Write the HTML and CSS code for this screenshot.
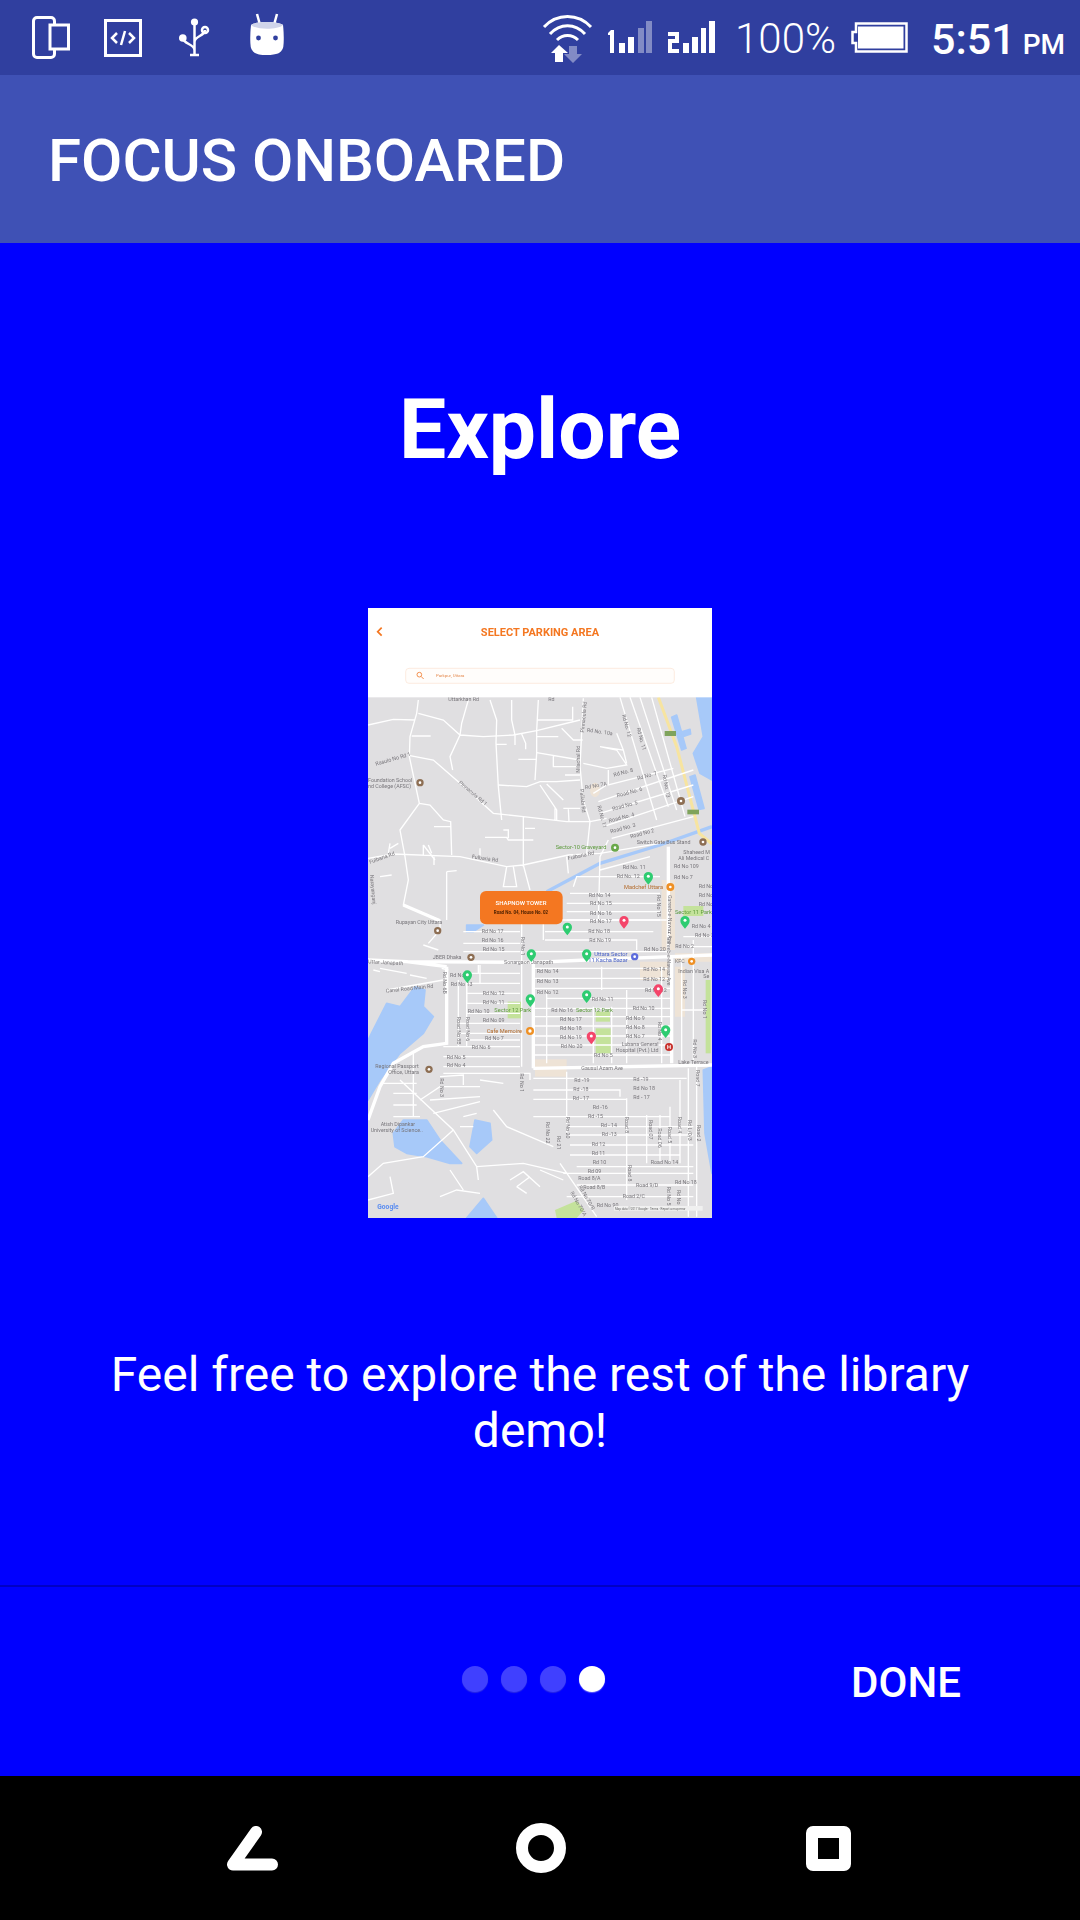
FILE: index.html
```html
<!DOCTYPE html>
<html lang="en">
<head>
<meta charset="utf-8">
<title>Focus Onboared</title>
<link rel="stylesheet" href="styles.css">
</head>
<body>
<div class="screen">
  <header class="status">
    <div class="status-left">
      <svg class="ic ic-device" viewBox="0 0 38 43"><rect x="1.5" y="1.5" width="21" height="40" rx="3.5" class="ol"/><rect x="18" y="9" width="18.5" height="24" class="ol fillbar"/></svg>
      <svg class="ic ic-code" viewBox="0 0 38 38"><rect x="1.5" y="1.5" width="35" height="35" class="ol"/><path d="M13 14l-5 5 5 5M25 14l5 5-5 5M21 12l-4 14" class="ol thin"/></svg>
      <svg class="ic ic-usb" viewBox="0 0 30 39"><circle cx="15.500" cy="4" r="3.600" class="sol"/><path d="M15.500 4V37M11 37H20M4 20c0 6 11.500 6 11.500 12M26 12c0 6-10.500 6-10.500 12" class="ol thin"/><circle cx="3.800" cy="20" r="3.800" class="sol"/><circle cx="26" cy="12" r="3" class="ol thin"/></svg>
      <svg class="ic ic-droid" viewBox="0 0 34 41"><path d="M7 0l2.500 9M27 0l-2.500 9" class="ol thin"/><path d="M1 11C6 7 28 7 33 11C34 20 34 30 33 34C31 39 27 41 17 41C7 41 3 39 1 34C0 30 0 20 1 11Z" class="sol"/><path d="M1 11C6 7 28 7 33 11C28 16 6 16 1 11Z" class="droid-top"/><circle cx="8.500" cy="24" r="2.400" class="eye"/><circle cx="25.500" cy="24" r="2.400" class="eye"/></svg>
    </div>
    <div class="status-right">
      <svg class="ic ic-wifi" viewBox="0 0 51 49"><path d="M2 14C15 0 36 0 49 14M8 21C18 10 33 10 43 21M15 27C21 21 30 21 36 27" class="ol wifi"/><path d="M17 32l9 8h-5v9h-8v-9H9Z" class="sol"/><path d="M27 33h8v8h5l-9 9-9-9h5Z" class="sol dim"/></svg>
      <svg class="ic ic-sim1" viewBox="0 0 44 32"><path d="M0 12l3-3h3v23H2V14H0ZM11 22h6v10h-6ZM20 16h6v16h-6Z" class="sol"/><path d="M30 7h6v25h-6ZM38 0h6v32h-6Z" class="sol dim"/></svg>
      <svg class="ic ic-sim2" viewBox="0 0 47 32"><path d="M0 11h11v11H4v6h7v4H0V18h7v-3H0ZM15 22h6v10h-6ZM24 16h6v16h-6ZM33 7h5v25h-5ZM41 0h6v32h-6Z" class="sol"/></svg>
      <span class="pct">100%</span>
      <svg class="ic ic-batt" viewBox="0 0 57 31"><path d="M5 1.500H55.500V29.500H5V21H1.500V10H5Z" class="ol batt"/><path d="M7 4.500H52.500V26.500H7Z" class="sol"/></svg>
      <span class="clock">5:51</span>
      <span class="ampm">PM</span>
    </div>
  </header>

  <div class="appbar">FOCUS ONBOARED</div>

  <main class="slide">
    <h1 class="slide-title">Explore</h1>
    <svg class="shot" viewBox="24 24 1032 1830" role="img" aria-label="Map of parking area">
      <rect x="24" y="24" width="1032" height="1830" class="land"/>
      <g class="parks">
        <rect x="443" y="1205" width="40" height="50"/>
        <rect x="707" y="1235" width="43" height="30"/>
        <rect x="707" y="1285" width="45" height="75"/>
        <rect x="970" y="918" width="60" height="30"/>
        <rect x="1037" y="1140" width="15" height="220"/>
        <path d="M585 1830L650 1802L672 1830L650 1854H590Z"/>
      </g>
      <g class="beige">
        <path d="M525 1378H620V1430H525Z"/>
        <path d="M905 840H945V1050H905ZM945 1060H1056V1085H945ZM945 1100H975V1250H945Z"/>
        <path d="M840 1085H925V1140H840Z"/>
        <path d="M690 570a14 20 0 1 0 30 0a14 20 0 1 0-30 0Z"/>
      </g>
      <g class="water">
        <path d="M1010 292H1056V540L1020 520L1000 460L1030 410Z"/>
        <path d="M935 352L950 345L978 445L965 450ZM950 400L990 388L992 402L955 415ZM990 530L1005 525L1032 625L1017 628Z"/>
        <path d="M24 1320L80 1210L120 1220L165 1160L195 1170L190 1220L220 1250L190 1300L120 1360L60 1440L24 1500Z"/>
        <path d="M320 975H370L340 995H320Z"/>
        <path d="M100 1600L130 1560L200 1560L240 1620L305 1690L270 1690L200 1670L140 1660L105 1640Z"/>
        <path d="M330 1640L345 1560L390 1570L395 1620L350 1660Z"/>
        <path d="M1030 1410L1056 1400V1720L1035 1600Z"/>
        <path d="M320 1854L370 1795L410 1854Z"/>
      </g>
      <path class="canal" d="M560 875L720 790L900 735L1056 680"/>
      <path class="yellow" d="M895 292L950 440L1018 700L1056 732"/>
      <g class="roads">
        <path d="M175 300L170 340L150 410L148 470L178 610L120 690L135 770L145 840L130 915L240 960M178 610L210 615L250 660L272 665L275 765M222 680H272M190 735L225 780M205 735L215 760"/>
        <path d="M175 340L250 360L300 405L370 410L460 405L530 392L660 360M24 375L100 358L165 360M155 408H212M325 300L305 370L300 405L270 470L278 510"/>
        <path d="M390 300L410 360L408 430L415 560L425 660M455 300L455 360L465 405L465 435M535 300L530 392L530 460L525 540M410 433H440M530 410H595M485 402L497 430V448M530 360H640M638 320V360"/>
        <path d="M150 467L220 480L300 550L400 640L490 650L620 665L690 665L740 655M415 555L500 560L540 545L590 545L660 540M540 555L590 630V660M560 552L610 600M625 628L627 665M585 625V660M610 625H660M490 650V800M375 712H440L445 720H520M495 685H525M430 690H445V715"/>
        <path d="M670 295L660 500L670 600L690 665L680 760M605 385L640 420H668M530 458L660 480M580 465V500H660M475 478H530M615 525H660M745 510V555L940 505M740 555L700 580M715 605L1000 510M720 640L1000 555M730 680L1000 590M755 715L1000 650"/>
        <path d="M780 292L890 660M810 292L925 620M840 292L950 630M875 292L975 650M670 490L740 505L800 495L770 450L720 440L790 450L800 490M790 450L770 400"/>
        <path d="M24 775L100 762L300 770L440 800L490 795L625 765L720 760L900 730M440 800L430 860H470L460 800M490 795L510 870M620 770L625 820M260 815L290 812M260 815V960M90 745L115 730M85 760L90 730M60 830L95 825M360 745V770M190 735V765M222 770V795"/>
        <path d="M745 720L720 770L715 960M720 810L870 770M630 880H900M640 860L650 830H900M620 910H900M620 935H900M620 960H900"/>
      </g>
      <g class="roads" transform="translate(0 900)">
        <path d="M310 95H480M310 130H480M310 155H480M360 195V250M330 220H480M320 250H480M320 280H480M320 310H480M320 340H480M290 370H480M290 400H480M320 420H480M250 440H480M250 470H480M250 500H480M295 240V440M320 240V440M355 195V220"/>
        <path d="M555 60H920M555 95H880M555 120H830V150M520 155H930M520 205H930M520 235H930M520 265H930M560 295H930M520 325H930M520 350H930M520 378H930M520 408H930M520 435H930M520 465H930M560 270V490M725 200V270M800 270V490M700 320V490M755 320V490M905 200V490M965 170V480M1000 120V480M970 110H1056M970 140H1056M965 330H1040"/>
        <path d="M485 0V500M550 0V120M205 130L240 90V60M190 135L235 150M60 205L140 220M150 225L200 235M245 205L265 210M60 215L40 210M80 270L250 240M320 255V310"/>
        <path d="M250 520H510V540M520 535H980M520 570H780V590M520 598H800V620M520 650H930M620 515V700M625 680H1000M625 705H1000M630 735H1000M630 765H960V790M650 800H1000M610 820H1000M650 855H1000M620 890H1000M985 505V950M960 540V790M860 645V790M900 645V790M930 620V790M800 595V900M1010 500V950"/>
        <path d="M60 550H170M100 580H170M100 615H170M160 460V650M100 650H180M180 600L240 560H360M210 600L360 590M220 640L360 605M240 530L310 525V555M360 540L430 550M120 540L280 690L350 800L490 790L620 820M280 690L190 770L70 790L24 830M350 800L355 840M240 890L290 870L360 880M90 830L100 880L24 900M450 840L490 815L540 860M470 860L510 830M500 880L470 860M270 810L310 870M350 640L310 650M400 630L440 680L580 740M300 680L340 680M540 810L610 840M600 790L710 950"/>
      </g>
      <g class="majors">
        <path d="M925 740V1060"/>
        <path transform="translate(0 900)" d="M24 180L140 185L260 200M140 185L520 187L680 180L930 170L1056 165M520 187V505M935 170V490M520 505L1056 495M260 200V430L190 440L100 490L60 560L24 660"/>
        <path d="M130 915L240 962" />
      </g>
      <g class="lbl">
        <text x="265" y="302">Uttarkhan Rd</text>
        <text x="565" y="302">Rd</text>
        <text x="680" y="395" transform="rotate(8 680 395)">Rd No. 10a</text>
        <text x="786" y="345" transform="rotate(75 786 345)">Rd No. 12</text>
        <text x="830" y="385" transform="rotate(75 830 385)">Rd No. 11</text>
        <text x="672" y="398" transform="rotate(-85 672 398)">Pinnacula Rd</text>
        <text x="48" y="497" transform="rotate(-16 48 497)">Rasulo No Rd 1</text>
        <text x="24" y="545">Foundation School</text>
        <text x="24" y="564">nd College (AFSC)</text>
        <text x="295" y="550" transform="rotate(40 295 550)">Pinnacula Rd 1</text>
        <text x="660" y="518" transform="rotate(-90 660 518)">Nilachal Rd</text>
        <text x="676" y="568" transform="rotate(-10 676 568)">Rd No 7A</text>
        <text x="762" y="530" transform="rotate(-15 762 530)">Rd No. 8</text>
        <text x="833" y="540" transform="rotate(-15 833 540)">Rd No. 7</text>
        <text x="772" y="592" transform="rotate(-15 772 592)">Road No. 6</text>
        <text x="758" y="632" transform="rotate(-15 758 632)">Road No. 5</text>
        <text x="748" y="668" transform="rotate(-15 748 668)">Road No. 4</text>
        <text x="752" y="700" transform="rotate(-15 752 700)">Road No. 3</text>
        <text x="812" y="715" transform="rotate(-15 812 715)">Road No 2</text>
        <text x="908" y="525" transform="rotate(80 908 525)">Rd No. 13</text>
        <text x="660" y="568" transform="rotate(85 660 568)">Pallabi Rd</text>
        <text x="712" y="618" transform="rotate(75 712 618)">Rd No. 11</text>
        <text x="830" y="732">Switch Gate Bus Stand</text>
        <text x="970" y="762">Shaheed M</text>
        <text x="955" y="779">Ali Medical C</text>
        <text x="30" y="792" transform="rotate(-20 30 792)">Fulbaria Rd</text>
        <text x="335" y="775" transform="rotate(8 335 775)">Fulbaria Rd</text>
        <text x="625" y="780" transform="rotate(-12 625 780)">Fulbaria Rd</text>
        <text x="788" y="806">Rd No. 11</text>
        <text x="770" y="834">Rd No. 12</text>
        <text x="942" y="803">Rd No 109</text>
        <text x="942" y="836">Rd No 7</text>
        <text x="1016" y="864">Rd No</text>
        <text x="1016" y="892">Rd No</text>
        <text x="1016" y="919">Rd No</text>
        <text x="30" y="825" transform="rotate(85 30 825)">Narayanganj</text>
        <text x="686" y="890">Rd No 14</text>
        <text x="690" y="916">Rd No 15</text>
        <text x="690" y="944">Rd No 16</text>
        <text x="892" y="885" transform="rotate(90 892 885)">Rd No 15</text>
        <text x="925" y="885" transform="rotate(90 925 885)">Gareeb-e-Nawaz Ave</text>
      </g>
      <text x="587" y="748" class="lbl-green">Sector-10 Graveyard</text>
      <text x="792" y="867" class="lbl-orange">Madchef Uttara</text>
      <text x="945" y="941" class="lbl-green">Sector 11 Park</text>
      <g class="lbl" transform="translate(0 900)">
        <text x="107" y="73">Rupayan City Uttara</text>
        <text x="365" y="99">Rd No 17</text>
        <text x="365" y="127">Rd No 16</text>
        <text x="368" y="153">Rd No 15</text>
        <text x="690" y="70">Rd No 17</text>
        <text x="685" y="98">Rd No 18</text>
        <text x="688" y="125">Rd No 19</text>
        <text x="852" y="153">Rd No 20</text>
        <text x="995" y="83">Rd No 4</text>
        <text x="1005" y="111">Rd No 3</text>
        <text x="946" y="143">Rd No 2</text>
        <text x="218" y="178">JBER Dhaka</text>
        <text x="24" y="190" transform="rotate(3 24 190)">Uttar Janapath</text>
        <text x="432" y="191">Sonargaon Janapath</text>
        <text x="530" y="218">Rd No 14</text>
        <text x="850" y="213">Rd No 14</text>
        <text x="530" y="249">Rd No 13</text>
        <text x="850" y="243">Rd No 12</text>
        <text x="530" y="281">Rd No 12</text>
        <text x="855" y="275">Rd No 12</text>
        <text x="695" y="304">Rd No 11</text>
        <text x="270" y="232">Rd No</text>
        <text x="272" y="259">Rd No 13</text>
        <text x="78" y="278" transform="rotate(-6 78 278)">Canal Road Main Rd</text>
        <text x="368" y="284">Rd No 12</text>
        <text x="368" y="311">Rd No 11</text>
        <text x="323" y="339">Rd No 10</text>
        <text x="368" y="366">Rd No 09</text>
        <text x="375" y="419">Rd No 7</text>
        <text x="335" y="447">Rd No 6</text>
        <text x="260" y="476">Rd No 5</text>
        <text x="260" y="502">Rd No 4</text>
        <text x="574" y="335">Rd No 16</text>
        <text x="818" y="331">Rd No 10</text>
        <text x="600" y="362">Rd No 17</text>
        <text x="798" y="359">Rd No 9</text>
        <text x="600" y="390">Rd No 18</text>
        <text x="798" y="386">Rd No 8</text>
        <text x="600" y="417">Rd No 19</text>
        <text x="798" y="413">Rd No 7</text>
        <text x="602" y="444">Rd No 20</text>
        <text x="702" y="470">Rd No 5</text>
        <text x="785" y="437">Lubana General</text>
        <text x="767" y="456">Hospital (Pvt.) Ltd</text>
        <text x="46" y="505">Regional Passport</text>
        <text x="85" y="523">Office, Uttara</text>
        <text x="62" y="677">Atish Dipankar</text>
        <text x="32" y="695">University of Science..</text>
        <text x="664" y="510">Gausul Azam Ave</text>
        <text x="955" y="493">Lake Terrace</text>
        <text x="945" y="190">KFC</text>
        <text x="955" y="218">Indian Visa A</text>
        <text x="1030" y="235">Se</text>
        <text x="643" y="545">Rd -19</text>
        <text x="640" y="573">Rd -18</text>
        <text x="638" y="600">Rd - 17</text>
        <text x="820" y="543">Rd -19</text>
        <text x="820" y="570">Rd No 18</text>
        <text x="820" y="597">Rd - 17</text>
        <text x="698" y="626">Rd -16</text>
        <text x="684" y="653">Rd -15</text>
        <text x="722" y="680">Rd - 14</text>
        <text x="725" y="707">Rd -13</text>
        <text x="695" y="737">Rd 12</text>
        <text x="695" y="764">Rd 11</text>
        <text x="698" y="791">Rd 10</text>
        <text x="683" y="820">Rd 09</text>
        <text x="872" y="793">Road No 14</text>
        <text x="945" y="853">Rd No 18</text>
        <text x="828" y="861">Road 9/D</text>
        <text x="788" y="893">Road 2/C</text>
        <text x="710" y="922">Rd No 90</text>
        <text x="655" y="840">Road 8/A</text>
        <text x="670" y="868">Road 8/B</text>
        <text x="250" y="215" transform="rotate(90 250 215)">Rd No 6B</text>
        <text x="290" y="350" transform="rotate(90 290 350)">Road No 8B</text>
        <text x="318" y="350" transform="rotate(90 318 350)">Road No 6</text>
        <text x="240" y="535" transform="rotate(90 240 535)">Rd No 3</text>
        <text x="482" y="110" transform="rotate(90 482 110)">Rd No 1</text>
        <text x="480" y="520" transform="rotate(90 480 520)">Rd No 1</text>
        <text x="895" y="365" transform="rotate(90 895 365)">Rd No 4</text>
        <text x="968" y="240" transform="rotate(90 968 240)">Rd No 3</text>
        <text x="1030" y="300" transform="rotate(90 1030 300)">Rd No 1</text>
        <text x="1000" y="418" transform="rotate(90 1000 418)">Rd No 3</text>
        <text x="1008" y="510" transform="rotate(90 1008 510)">Road 7</text>
        <text x="920" y="110" transform="rotate(90 920 110)">Gareeb-e-Nawaz Ave</text>
        <text x="558" y="665" transform="rotate(90 558 665)">Rd No 22</text>
        <text x="590" y="708" transform="rotate(90 590 708)">Rd 21</text>
        <text x="617" y="650" transform="rotate(90 617 650)">Rd No 20</text>
        <text x="795" y="650" transform="rotate(90 795 650)">Road 8</text>
        <text x="868" y="660" transform="rotate(90 868 660)">Road 07</text>
        <text x="895" y="685" transform="rotate(90 895 685)">Road 06</text>
        <text x="925" y="680" transform="rotate(90 925 680)">Road 5</text>
        <text x="953" y="650" transform="rotate(90 953 650)">Road 4</text>
        <text x="985" y="660" transform="rotate(90 985 660)">Rd L/0/3</text>
        <text x="1012" y="675" transform="rotate(90 1012 675)">Road 2</text>
        <text x="805" y="795" transform="rotate(90 805 795)">Road 8</text>
        <text x="630" y="878" transform="rotate(60 630 878)">Rd No 70/A</text>
        <text x="655" y="860" transform="rotate(60 655 860)">Rd No 70/B</text>
        <text x="922" y="860" transform="rotate(90 922 860)">Rd No 5</text>
        <text x="950" y="870" transform="rotate(90 950 870)">Rd No 4</text>
      </g>
      <g transform="translate(0 900)">
        <text x="403" y="336" class="lbl-green">Sector 12 Park</text>
        <text x="648" y="336" class="lbl-green">Sector 12 Park</text>
        <text x="380" y="398" class="lbl-orange">Cafe Memoire</text>
        <text x="703" y="168" class="lbl-blue">Uttara Sector</text>
        <text x="685" y="185" class="lbl-blue">11 Kacha Bazar</text>
        <text x="52" y="926" class="google">Google</text>
        <rect x="762" y="918" width="266" height="14" class="attr-bg"/>
        <text x="765" y="929" class="attr">Map data ©2017 Google · Terms · Report a map error</text>
        <circle cx="233" cy="92" r="11" class="poi-brown"/>
        <circle cx="333" cy="172" r="11" class="poi-brown"/>
        <circle cx="207" cy="508" r="11" class="poi-brown"/>
        <circle cx="510" cy="393" r="12" class="poi-orange"/>
        <circle cx="995" cy="184" r="11" class="poi-orange"/>
        <circle cx="824" cy="170" r="11" class="poi-blue"/>
        <circle cx="927" cy="441" r="12" class="poi-red"/>
        <circle cx="233" cy="92" r="4" class="poi-dot"/>
        <circle cx="333" cy="172" r="4" class="poi-dot"/>
        <circle cx="207" cy="508" r="4" class="poi-dot"/>
        <circle cx="510" cy="393" r="5" class="poi-dot"/>
        <circle cx="995" cy="184" r="4" class="poi-dot"/>
        <circle cx="824" cy="170" r="4" class="poi-dot"/>
        <path d="M923 435v12M931 435v12M923 441h8" class="poi-h"/>
      </g>
      <circle cx="180" cy="548" r="11" class="poi-brown"/>
      <circle cx="963" cy="603" r="12" class="poi-brown"/>
      <circle cx="1029" cy="726" r="11" class="poi-brown"/>
      <circle cx="765" cy="743" r="12" class="poi-green"/>
      <circle cx="931" cy="861" r="12" class="poi-orange"/>
      <circle cx="180" cy="548" r="4" class="poi-dot"/>
      <circle cx="963" cy="603" r="4" class="poi-dot"/>
      <circle cx="1029" cy="726" r="4" class="poi-dot"/>
      <circle cx="765" cy="743" r="4" class="poi-dot"/>
      <circle cx="931" cy="861" r="4" class="poi-dot"/>
      <rect x="914" y="393" width="34" height="15" class="shield"/>
      <rect x="982" y="629" width="35" height="14" class="shield"/>
      <defs>
        <g id="pin"><path d="M0 24C-8 14-14 8-14 0A14 14 0 0 1 14 0C14 8 8 14 0 24Z"/><circle cx="0" cy="-1" r="4.500" class="pin-dot"/></g>
      </defs>
      <g class="pin-green">
        <use href="#pin" x="865" y="830"/>
        <use href="#pin" x="975" y="962"/>
        <use href="#pin" x="622" y="982"/>
        <use href="#pin" x="514" y="1062"/>
        <use href="#pin" x="680" y="1062"/>
        <use href="#pin" x="322" y="1125"/>
        <use href="#pin" x="511" y="1197"/>
        <use href="#pin" x="680" y="1185"/>
        <use href="#pin" x="917" y="1290"/>
      </g>
      <g class="pin-red">
        <use href="#pin" x="792" y="962"/>
        <use href="#pin" x="895" y="1167"/>
        <use href="#pin" x="694" y="1309"/>
      </g>
      <rect x="360" y="873" width="248" height="100" rx="18" class="orange"/>
      <text x="483" y="915" class="callout-a">SHAPNOW TOWER</text>
      <text x="483" y="943" class="callout-b">Road No. 04, House No. 02</text>
      <rect x="24" y="24" width="1032" height="268" class="head"/>
      <path d="M65 83L53 95L65 107" class="chev"/>
      <text x="540" y="107" class="head-title">SELECT PARKING AREA</text>
      <rect x="137" y="205" width="806" height="45" rx="10" class="searchbox"/>
      <circle cx="178" cy="224" r="7" class="searchic"/>
      <path d="M183 229L191 237" class="searchic"/>
      <text x="228" y="231" class="search-text">Parkpur, Uttara</text>
    </svg>
    <p class="slide-text">Feel free to explore the rest of the library demo!</p>
  </main>

  <footer class="pager">
    <div class="dots">
      <span class="dot"></span>
      <span class="dot"></span>
      <span class="dot"></span>
      <span class="dot active"></span>
    </div>
    <span class="done">DONE</span>
  </footer>

  <nav class="navbar">
    <svg class="nav-back" viewBox="0 0 53 45"><path d="M30 6L7 38.500H46" class="navline"/></svg>
    <svg class="nav-home" viewBox="0 0 50 50"><circle cx="25" cy="25" r="19" class="navring"/></svg>
    <svg class="nav-sq" viewBox="0 0 45 45"><rect x="6" y="6" width="33" height="33" rx="1" class="navsq"/></svg>
  </nav>
</div>
</body>
</html>
```
FILE: styles.css
```css
* { box-sizing: border-box; }
html, body { margin: 0; padding: 0; }
body { width: 1080px; height: 1920px; overflow: hidden; font-family: Roboto, "Liberation Sans", sans-serif; color: #fff; }
.screen { width: 1080px; height: 1920px; display: flex; flex-direction: column; background: #0000ff; }

.status { height: 75px; flex: none; background: #303f9f; display: flex; justify-content: space-between; align-items: flex-start; padding: 0 15px 0 32px; }
.status-left { display: flex; align-items: flex-start; }
.status-right { display: flex; align-items: flex-start; }
.ic { display: block; flex: none; overflow: visible; }
.ol { fill: none; stroke: #fff; stroke-width: 3; }
.ol.fillbar { fill: #303f9f; }
.ol.thin { stroke-width: 2.5; }
.ol.wifi { stroke-width: 3; }
.ol.batt { stroke-width: 2.5; }
.sol { fill: #fff; }
.sol.dim { opacity: .4; }
.droid-top { fill: #cfd4ea; }
.eye { fill: #303f9f; }
.ic-device { width: 38px; height: 43px; margin-top: 16px; }
.ic-code { width: 38px; height: 38px; margin: 19px 0 0 34px; }
.ic-usb { width: 30px; height: 39px; margin: 18px 0 0 37px; }
.ic-droid { width: 34px; height: 41px; margin: 14px 0 0 41px; }
.ic-wifi { width: 51px; height: 49px; margin-top: 13px; }
.ic-sim1 { width: 44px; height: 32px; margin: 21px 0 0 15px; }
.ic-sim2 { width: 47px; height: 32px; margin: 21px 0 0 16px; }
.pct { font-size: 42px; font-weight: 300; line-height: 50px; margin: 14px 0 0 20px; }
.ic-batt { width: 57px; height: 31px; margin: 22px 0 0 15px; }
.clock { font-size: 43px; font-weight: 500; line-height: 50px; margin: 14px 0 0 23px; }
.ampm { font-size: 28px; font-weight: 500; line-height: 34px; margin: 28px 0 0 7px; }

.appbar { height: 168px; flex: none; background: #3f51b5; padding: 6px 0 0 48px; font-size: 60px; font-weight: 500; line-height: 160px; }

.slide { flex: 1; display: flex; flex-direction: column; align-items: center; }
.slide-title { margin: 131px 0 0; font-size: 84px; font-weight: 700; line-height: 112px; height: 234px; }
.shot { display: block; width: 344px; height: 610px; flex: none; filter: blur(0.45px); }
.slide-text { margin: 129px 0 0; width: 900px; text-align: center; font-size: 48px; line-height: 56px; }

.land { fill: #e0dfe1; }
.parks { fill: #c4e29b; }
.beige { fill: #eee3d6; }
.water { fill: #a7c9f9; stroke: #a7c9f9; stroke-width: 5; stroke-linejoin: round; }
.canal { fill: none; stroke: #a7c9f9; stroke-width: 10; }
.yellow { fill: none; stroke: #f7e4a0; stroke-width: 9; }
.roads { fill: none; stroke: #fff; stroke-width: 4; }
.roads path { fill: none; }
.majors { fill: none; stroke: #fff; stroke-width: 10; }
.lbl { font-size: 16px; fill: #77757a; font-family: Roboto, sans-serif; }
.lbl-green { font-size: 17px; fill: #5c9a3c; font-family: Roboto, sans-serif; }
.lbl-orange { font-size: 17px; fill: #b36a2a; font-family: Roboto, sans-serif; }
.lbl-blue { font-size: 17px; fill: #4a62c8; font-family: Roboto, sans-serif; }
.google { font-size: 20px; font-weight: 700; fill: #5a8cf0; font-family: Roboto, sans-serif; }
.attr-bg { fill: #f0f0f0; }
.attr { font-size: 9px; fill: #666; font-family: Roboto, sans-serif; }
.poi-brown { fill: #8d6e53; }
.poi-orange { fill: #ef9024; }
.poi-blue { fill: #5c6bdc; }
.poi-red { fill: #c8322e; }
.poi-green { fill: #69a84a; }
.poi-dot { fill: #fff; }
.poi-h { fill: none; stroke: #fff; stroke-width: 2.5; }
.shield { fill: #7fa35c; }
.pin-green { fill: #2ecc71; }
.pin-red { fill: #f4456a; }
.pin-dot { fill: #fff; }
.orange { fill: #f47721; }
.callout-a { font-size: 18px; fill: #fff; font-weight: 500; text-anchor: middle; font-family: Roboto, sans-serif; }
.callout-b { font-size: 13.500px; fill: #4a1f00; font-weight: 700; text-anchor: middle; font-family: Roboto, sans-serif; }
.head { fill: #fff; }
.chev { fill: none; stroke: #f47721; stroke-width: 5; }
.head-title { font-size: 33px; font-weight: 700; fill: #f47721; text-anchor: middle; font-family: Roboto, sans-serif; }
.searchbox { fill: #fffdfb; stroke: #fbe3d2; stroke-width: 2; }
.searchic { fill: none; stroke: #f4914f; stroke-width: 3; }
.search-text { font-size: 13px; fill: #e58b50; font-family: Roboto, sans-serif; }

.pager { height: 191px; flex: none; border-top: 2px solid #0000c4; display: flex; align-items: flex-start; }
.dots { display: flex; gap: 13px; margin: 79px 0 0 462px; }
.dot { width: 26px; height: 26px; border-radius: 50%; background: #4040ff; box-shadow: 0 1px 1px #2a2ae6; }
.dot.active { background: #fff; box-shadow: 0 1px 1px #6060ff; }
.done { font-size: 42px; font-weight: 500; line-height: 48px; margin: 72px 0 0 auto; padding-right: 119px; }

.navbar { height: 144px; flex: none; background: #000; display: flex; align-items: flex-start; padding-left: 226px; }
.nav-back { width: 53px; height: 45px; margin-top: 50px; }
.nav-home { width: 50px; height: 50px; margin: 47px 0 0 237px; }
.nav-sq { width: 45px; height: 45px; margin: 50px 0 0 240px; }
.navline { fill: none; stroke: #fff; stroke-width: 12; stroke-linecap: round; stroke-linejoin: round; }
.navring { fill: none; stroke: #fff; stroke-width: 12; }
.navsq { fill: none; stroke: #fff; stroke-width: 12; stroke-linejoin: round; }
```
